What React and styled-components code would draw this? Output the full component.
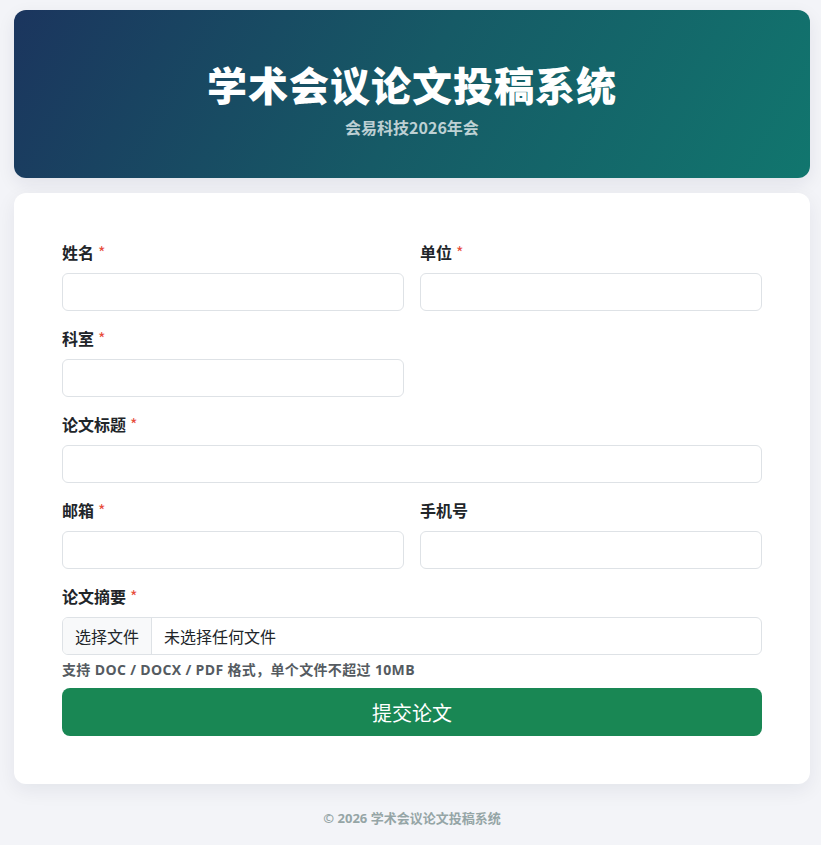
import React from "react";
import styled, { createGlobalStyle } from "styled-components";

const Global = createGlobalStyle`
  * { box-sizing: border-box; }
  html, body { margin: 0; padding: 0; }
  body {
    background: #f3f4f8;
    font-family: "Open Sans", "Noto Sans CJK SC", sans-serif;
    color: #212529;
  }
`;

const Page = styled.div`
  padding: 10px 11px 0 14px;
  min-height: 845px;
`;

const Header = styled.header`
  background: linear-gradient(120deg, #1b355e 0%, #165a66 50%, #11766e 100%);
  border-radius: 12px;
  padding: 50px 20px 39px;
  text-align: center;
  color: #fff;
  box-shadow: 0 6px 18px rgba(20, 30, 60, 0.08);
`;

const Title = styled.h1`
  margin: 0;
  font-family: "Noto Sans CJK SC", sans-serif;
  font-size: 40px;
  font-weight: 900;
  line-height: 48px;
  letter-spacing: 1px;
`;

const Subtitle = styled.div`
  margin-top: 7px;
  font-family: "Noto Sans CJK SC", sans-serif;
  font-size: 16px;
  font-weight: 700;
  line-height: 24px;
  color: rgba(255, 255, 255, 0.72);
`;

const Card = styled.main`
  margin-top: 15px;
  background: #fff;
  border-radius: 12px;
  padding: 48px;
  box-shadow: 0 6px 20px rgba(20, 30, 60, 0.07);
`;

const Row = styled.div`
  display: grid;
  grid-template-columns: ${(p) => (p.$cols === 1 ? "1fr" : "1fr 1fr")};
  gap: 16px;
`;

const Field = styled.div`
  margin-bottom: ${(p) => (p.$tight ? "0" : "16px")};
`;

const Label = styled.label`
  display: block;
  font-family: "Noto Sans CJK SC", sans-serif;
  font-size: 16px;
  font-weight: 700;
  line-height: 22px;
  margin-bottom: 10px;
  color: #212529;
`;

const Req = styled.span`
  color: #e74c3c;
  margin-left: 4px;
  font-weight: 400;
`;

const Input = styled.input`
  display: block;
  width: 100%;
  height: 38px;
  border: 1px solid #dee2e6;
  border-radius: 6px;
  padding: 6px 12px;
  font-size: 16px;
  outline: none;
  background: #fff;
`;

const FileBox = styled.div`
  display: flex;
  height: 38px;
  border: 1px solid #dee2e6;
  border-radius: 6px;
  overflow: hidden;
  font-family: "Noto Sans CJK SC", sans-serif;
  font-size: 16px;
  color: #212529;
`;

const FileButton = styled.span`
  display: flex;
  align-items: center;
  padding: 0 12px;
  background: #f8f9fa;
  border-right: 1px solid #dee2e6;
`;

const FileName = styled.span`
  display: flex;
  align-items: center;
  padding: 0 12px;
`;

const Hint = styled.div`
  margin-top: 4px;
  font-size: 14px;
  font-weight: 700;
  line-height: 21px;
  letter-spacing: 0.35px;
  color: #555b61;
`;

const Submit = styled.button`
  display: block;
  width: 100%;
  height: 48px;
  margin-top: 8px;
  border: none;
  border-radius: 8px;
  background: #198754;
  color: #fff;
  font-family: "Noto Sans CJK SC", sans-serif;
  font-size: 20px;
  font-weight: 400;
  cursor: pointer;
`;

const Footer = styled.footer`
  text-align: center;
  padding: 24px 0;
  font-size: 13px;
  font-weight: 700;
  color: #95a5a6;
  line-height: 20px;
`;

function F({ label, required }) {
  return (
    <Field>
      <Label>
        {label}
        {required && <Req>*</Req>}
      </Label>
      <Input type="text" />
    </Field>
  );
}

export default function App() {
  return (
    <>
      <Global />
      <Page>
        <Header>
          <Title>学术会议论文投稿系统</Title>
          <Subtitle>会易科技2026年会</Subtitle>
        </Header>
        <Card>
          <Row>
            <F label="姓名" required />
            <F label="单位" required />
          </Row>
          <Row>
            <F label="科室" required />
          </Row>
          <Row $cols={1}>
            <F label="论文标题" required />
          </Row>
          <Row>
            <F label="邮箱" required />
            <F label="手机号" />
          </Row>
          <Field $tight>
            <Label>
              论文摘要<Req>*</Req>
            </Label>
            <FileBox>
              <FileButton>选择文件</FileButton>
              <FileName>未选择任何文件</FileName>
            </FileBox>
            <Hint>支持 DOC / DOCX / PDF 格式，单个文件不超过 10MB</Hint>
          </Field>
          <Submit type="button">提交论文</Submit>
        </Card>
        <Footer>© 2026 学术会议论文投稿系统</Footer>
      </Page>
    </>
  );
}
